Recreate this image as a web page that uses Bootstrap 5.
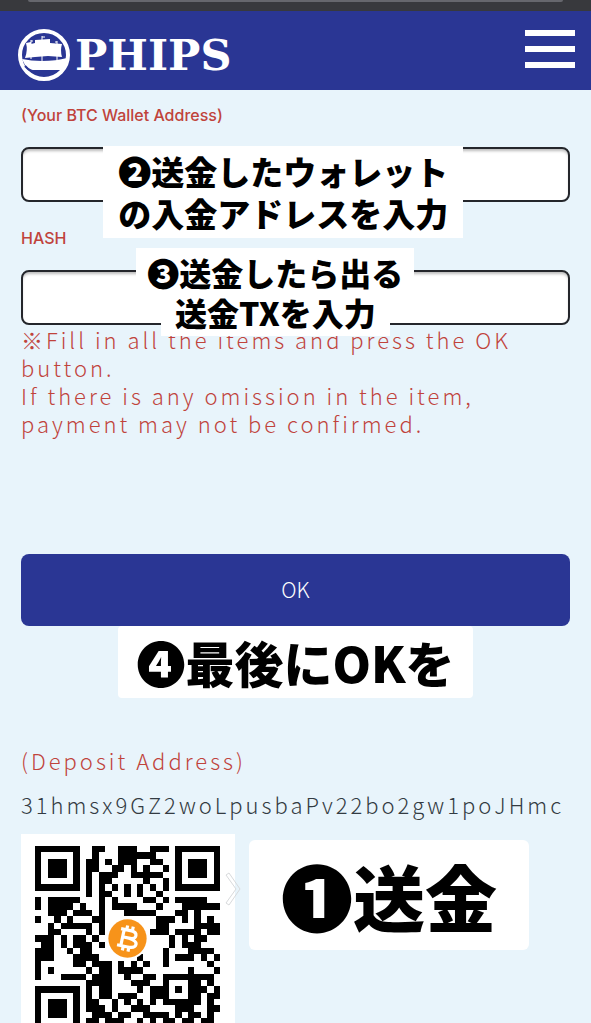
<!DOCTYPE html>
<html lang="ja">
<head>
<meta charset="utf-8">
<meta name="viewport" content="width=device-width, initial-scale=1">
<title>PHIPS</title>
<link href="https://cdn.jsdelivr.net/npm/bootstrap@5.3.0/dist/css/bootstrap.min.css" rel="stylesheet">
<style>
  body { background: #e8f4fb; color: #333b42; font-family: "Noto Sans CJK JP", sans-serif; }
  .browser-edge { height: 11px; background: #38393d; padding: 0 28px; }
  .browser-edge div { height: 2px; background: #66676d; border-radius: 0 0 8px 8px; }
  .site-bar { background: #2a3694; height: 79px; padding: 0 16px 0 17px; }
  .brand-name { font-family: "DejaVu Serif", serif; font-weight: 700; font-size: 43px; line-height: 48px; }
  .menu-btn { width: 50px; height: 38px; }
  .menu-btn span { display: block; height: 6px; background: #fff; }
  .page { padding: 13px 21px 0; }
  .red { color: #c0433b; }
  .field-label { font-family: "Inter", "Noto Sans CJK JP", sans-serif; font-size: 16px; font-weight: 500; line-height: 24px; }
  .field-box { height: 55px; border: 2px solid #24262b; border-radius: 8px; box-shadow: inset 0 3px 3px -1px #bbb; }
  .spaced { font-weight: 300; font-size: 22px; line-height: 28px; letter-spacing: 3px; }
  .note { background: #fff; color: #000; font-weight: 900; }
  .note-over { z-index: 2; white-space: nowrap; }
  .note-two { left: 15%; top: -1px; padding: 4px 15px; font-size: 33px; line-height: 42px; }
  .note-three { left: 21%; top: -22px; font-size: 32px; line-height: 40px; }
  .note-three span { background: #fff; padding: 4px 11px 0; }
  .note-three span + span { padding: 0 14px 4px; }
  .note-four { font-size: 49px; line-height: 72px; padding: 0 18px; }
  .note-one { font-size: 72px; line-height: 110px; padding: 0 32px; margin-top: 6px; }
  .ok-btn { height: 72px; margin-top: 117px; border-radius: 8px; background: #2a3694; color: #fff; font-weight: 300; font-size: 21px; }
  .ok-btn:hover { background: #222c80; color: #fff; }
  .deposit-row { gap: 14px; }
  .qr-card { background: #fff; padding: 12px 15px 15px 14px; }
  .arrow { right: -6px; top: 38px; }
</style>
</head>
<body>
<div class="browser-edge"><div></div></div>
<header class="site-bar d-flex justify-content-between align-items-center">
  <a href="#" class="d-flex align-items-center text-white text-decoration-none gap-1 pt-2">
    <svg width="54" height="54" viewBox="0 0 54 54" aria-hidden="true">
      <circle cx="27" cy="27" r="24" fill="none" stroke="#fff" stroke-width="4"/>
      <path fill="#fff" d="M9 15l5-1v2l4-1v-3l15-1v4l12 1q-2 6 0 13l-14-1-13 1-10 1q3-8 1-15z"/>
      <path fill="none" stroke="#fff" d="M14 12v19M25 8v25M40 13v19M25 9h3M14 13h2M38 14h2"/>
      <path fill="#fff" d="M5 31q9 2 20 2 14 0 25-3-1 6-4 12H13l-5-5z"/>
      <path fill="none" stroke="#2a3694" stroke-width="2" d="M8 38q5 6 13 6h18"/>
    </svg>
    <span class="brand-name">PHIPS</span>
  </a>
  <button type="button" class="menu-btn btn p-0 mb-1 border-0 rounded-0 d-flex flex-column justify-content-between align-items-stretch" aria-label="Menu"><span></span><span></span><span></span></button>
</header>

<main class="page">
  <form>
    <label for="wallet" class="field-label red d-block mb-3 pb-1">(Your BTC Wallet Address)</label>
    <div class="position-relative">
      <input id="wallet" type="text" class="field-box form-control">
      <div class="note note-over note-two position-absolute">❷送金したウォレット<br>の入金アドレスを入力</div>
    </div>
    <label for="hash" class="field-label red d-block pt-4 mb-3 pb-1">HASH</label>
    <div class="position-relative">
      <input id="hash" type="text" class="field-box form-control">
      <div class="note-over note-three position-absolute d-flex flex-column align-items-center"><span class="note">❸送金したら出る</span><span class="note">送金TXを入力</span></div>
    </div>
    <p class="spaced red mb-0">※Fill in all the items and press the OK button.<br>If there is any omission in the item, payment may not be confirmed.</p>
    <button type="submit" class="ok-btn btn w-100 border-0">OK</button>
  </form>
  <div class="text-center"><div class="note note-four d-inline-block rounded-1">❹最後にOKを</div></div>

  <h2 class="spaced red mb-3 mt-5">(Deposit Address)</h2>
  <p class="spaced mb-3">31hmsx9GZ2woLpusbaPv22bo2gw1poJHmc</p>
  <div class="deposit-row d-flex align-items-start">
    <div class="qr-card position-relative">
      <svg id="qr" class="d-block" width="185" height="185" viewBox="0 0 29 29" role="img" aria-label="QR code" shape-rendering="crispEdges"></svg>
      <svg class="arrow position-absolute" width="16" height="34" viewBox="0 0 16 34" aria-hidden="true"><path d="M1 3l3-2 11 16L4 33l-3-2 10-14z" fill="none" stroke="#d8dadc"/></svg>
    </div>
    <div class="note note-one rounded-2">❶送金</div>
  </div>
</main>
<script>
  const rows = [
    "11111110011001110011101111111", "10000010010001111110001000001", "10111010110101110011001011101",
    "10111010110011010100101011101", "10111010101110011111001011101", "10000010101100000100101000001",
    "11111110101010101010101111111", "00000000101100101001000000000", "10111110001010000110101111100",
    "10111101001011110001000111111", "00111011101000111110001101000", "10010100011000000001110101010",
    "00101111101000000001100001111", "00110000101000000011101111011", "11101011010000000000010101100",
    "01101011101000000000010111000", "11100101100000000000100011110", "11100011110000001000101110101",
    "10000011011101010100100000010", "10100000101101111000000010001", "10001111011100100110111111110",
    "00000000111100011100100011010", "11111110101100001011101011101", "10000010101101110011100011011",
    "10111010110010101010111111010", "10111010111010011100001110011", "10111010011101100111101011010",
    "10000010110111001010110110110", "11111110101101011010011010101"
  ];
  let d = "";
  rows.forEach((row, y) => [...row].forEach((cell, x) => { if (cell === "1") d += `M${x} ${y}h1v1h-1z`; }));
  document.getElementById("qr").innerHTML = `<path d="${d}"/>
    <g shape-rendering="auto"><circle cx="14.5" cy="14.5" r="3.3" fill="#fff"/><circle cx="14.5" cy="14.5" r="3" fill="#f7931a"/>
    <g transform="rotate(12 14.5 14.5)" fill="none" stroke="#fff" stroke-width=".5"><path d="M13.2 13.2h1.5q1 0 1 .6t-1 .6h-1q2.3 0 2.3.7t-1.2.7h-1.7M13.7 13.2v2.6M14.1 12.5v.7M15 12.5v.7M14.1 15.8v.7M15 15.8v.7"/></g></g>`;
</script>
<script src="https://cdn.jsdelivr.net/npm/bootstrap@5.3.0/dist/js/bootstrap.bundle.min.js"></script>
</body>
</html>
